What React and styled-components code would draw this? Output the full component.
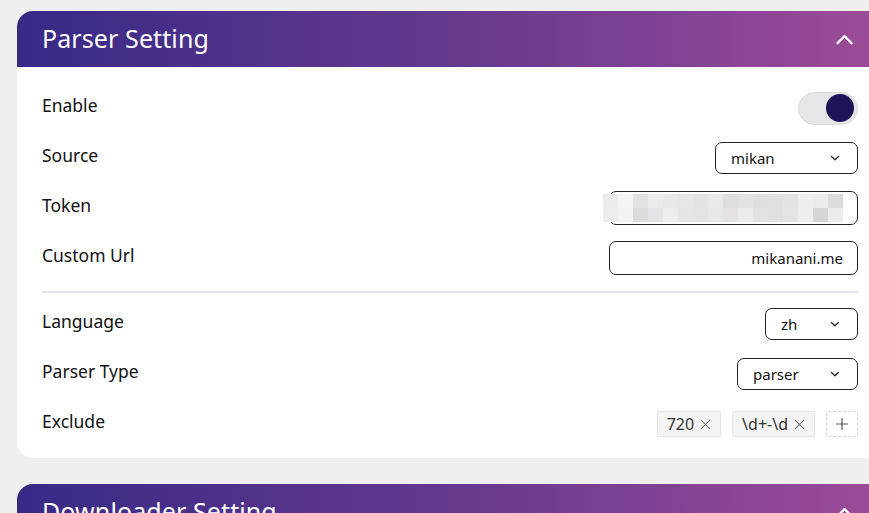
import styled, { createGlobalStyle } from "styled-components";

const GlobalStyle = createGlobalStyle`
  html, body {
    margin: 0;
    background: #efefef;
    overflow: hidden;
  }
  body {
    font-family: "Noto Sans", "Open Sans", sans-serif;
    color: #111;
  }
`;

const Page = styled.div`
  padding: 11px 0 0 17px;
  display: flex;
  flex-direction: column;
  gap: 26px;
`;

const Card = styled.section`
  width: 866px;
  background: #fff;
  border-radius: 16px;
  overflow: hidden;
  flex-shrink: 0;
`;

const Header = styled.header`
  height: 56px;
  display: flex;
  align-items: center;
  justify-content: space-between;
  padding: 0 29px 0 25px;
  background: linear-gradient(90deg, #372a86 0%, #6a3a8f 55%, #9d4c98 100%);
  color: #fff;

  h2 {
    margin: 0 0 2px;
    font-size: 25px;
    font-weight: 400;
    letter-spacing: 0.1px;
  }
`;

const Body = styled.div`
  padding: 16px 25px 9px 25px;
`;

const Row = styled.div`
  height: 50px;
  display: flex;
  align-items: center;
  justify-content: space-between;
`;

const Label = styled.span`
  font-size: 17.5px;
  padding-bottom: 7px;
`;

const Divider = styled.hr`
  border: none;
  height: 2px;
  background: #dfe1ee;
  margin: 8px 0 6px;
`;

const Switch = styled.div`
  width: 60px;
  height: 33px;
  border-radius: 17px;
  background: #e6e6e6;
  border: 1px solid #dadada;
  display: flex;
  align-items: center;
  justify-content: flex-end;
  padding: 0 3px;
  box-sizing: border-box;

  &::after {
    content: "";
    width: 28px;
    height: 28px;
    border-radius: 50%;
    background: #1d145a;
  }
`;

const Select = styled.div`
  width: ${(p) => p.$w}px;
  height: 32px;
  box-sizing: border-box;
  border: 1px solid #222;
  border-radius: 7px;
  display: flex;
  align-items: center;
  justify-content: space-between;
  padding: 0 17px 0 15px;
  font-size: 15px;

  svg {
    width: 10px;
    height: 10px;
  }
`;

const Input = styled.div`
  width: 249px;
  height: 34px;
  box-sizing: border-box;
  border: 1px solid #222;
  border-radius: 7px;
  display: flex;
  align-items: center;
  justify-content: flex-end;
  padding: 0 14px;
  font-size: 15px;
`;

const Blur = styled.div`
  display: grid;
  grid-template-columns: repeat(16, 15px);
  grid-auto-rows: 14px;
  margin: 0 0 0 -20px;
`;

const BlurCell = styled.span`
  background: ${(p) => p.$c};
`;

const Tags = styled.div`
  display: flex;
  align-items: center;
  gap: 11px;
`;

const Tag = styled.span`
  height: 26px;
  box-sizing: border-box;
  display: inline-flex;
  align-items: center;
  gap: 6px;
  padding: 0 9px;
  background: #f4f4f5;
  border: 1px solid #e4e4e7;
  border-radius: 2px;
  font-size: 16px;
  color: #333;

  svg {
    width: 11px;
    height: 11px;
  }
`;

const AddTag = styled.span`
  width: 32px;
  height: 26px;
  box-sizing: border-box;
  border: 1px dashed #d4d4d8;
  border-radius: 2px;
  display: flex;
  align-items: center;
  justify-content: center;

  svg {
    width: 12px;
    height: 12px;
  }
`;

const Chevron = ({ up }) => (
  <svg viewBox="0 0 20 20" width="19" height="19" fill="none" stroke="currentColor" strokeWidth="2.4" strokeLinecap="round" strokeLinejoin="round">
    <path d={up ? "M2.5 14 L10 6.5 L17.5 14" : "M2.5 6.5 L10 14 L17.5 6.5"} />
  </svg>
);

const Down = () => (
  <svg viewBox="0 0 10 10" fill="none" stroke="#222" strokeWidth="1.3" strokeLinecap="round" strokeLinejoin="round">
    <path d="M1.5 3.5 L5 6.8 L8.5 3.5" />
  </svg>
);

const Close = () => (
  <svg viewBox="0 0 12 12" fill="none" stroke="#777" strokeWidth="1.3" strokeLinecap="round">
    <path d="M1.5 1.5 L10.5 10.5 M10.5 1.5 L1.5 10.5" />
  </svg>
);

const Plus = () => (
  <svg viewBox="0 0 12 12" fill="none" stroke="#555" strokeWidth="1.2" strokeLinecap="round">
    <path d="M6 0.5 V11.5 M0.5 6 H11.5" />
  </svg>
);

const blurColors = [
  "#ececec", "#f4f4f4", "#e1e1e1", "#ebebeb", "#e8e8e8", "#e6e6e6", "#e3e3e5", "#e9e9eb",
  "#dedede", "#e2e2e2", "#dfdfdf", "#e0e0e0", "#e2e3e6", "#eeeeee", "#ebebeb", "#dcdcdc",
  "#ededed", "#f2f2f2", "#dcdcda", "#e4e4e6", "#eceeee", "#e5e5e5", "#e4e4e4", "#e7e7e7",
  "#e6e2e2", "#eaeced", "#e3e3e3", "#e0e0e0", "#e4e4e4", "#eeeeee", "#d5d5d3", "#ebebeb",
];

function App() {
  return (
    <>
      <GlobalStyle />
      <Page>
        <Card>
          <Header>
            <h2>Parser Setting</h2>
            <Chevron up />
          </Header>
          <Body>
            <Row>
              <Label>Enable</Label>
              <Switch />
            </Row>
            <Row>
              <Label>Source</Label>
              <Select $w={143}>
                mikan
                <Down />
              </Select>
            </Row>
            <Row>
              <Label>Token</Label>
              <Input>
                <Blur>
                  {blurColors.map((c, i) => (
                    <BlurCell key={i} $c={c} />
                  ))}
                </Blur>
              </Input>
            </Row>
            <Row>
              <Label>Custom Url</Label>
              <Input>mikanani.me</Input>
            </Row>
            <Divider />
            <Row>
              <Label>Language</Label>
              <Select $w={93}>
                zh
                <Down />
              </Select>
            </Row>
            <Row>
              <Label>Parser Type</Label>
              <Select $w={121}>
                parser
                <Down />
              </Select>
            </Row>
            <Row>
              <Label>Exclude</Label>
              <Tags>
                <Tag>
                  720 <Close />
                </Tag>
                <Tag>
                  \d+-\d <Close />
                </Tag>
                <AddTag>
                  <Plus />
                </AddTag>
              </Tags>
            </Row>
          </Body>
        </Card>
        <Card>
          <Header>
            <h2>Downloader Setting</h2>
            <Chevron up />
          </Header>
        </Card>
      </Page>
    </>
  );
}

export default App;
